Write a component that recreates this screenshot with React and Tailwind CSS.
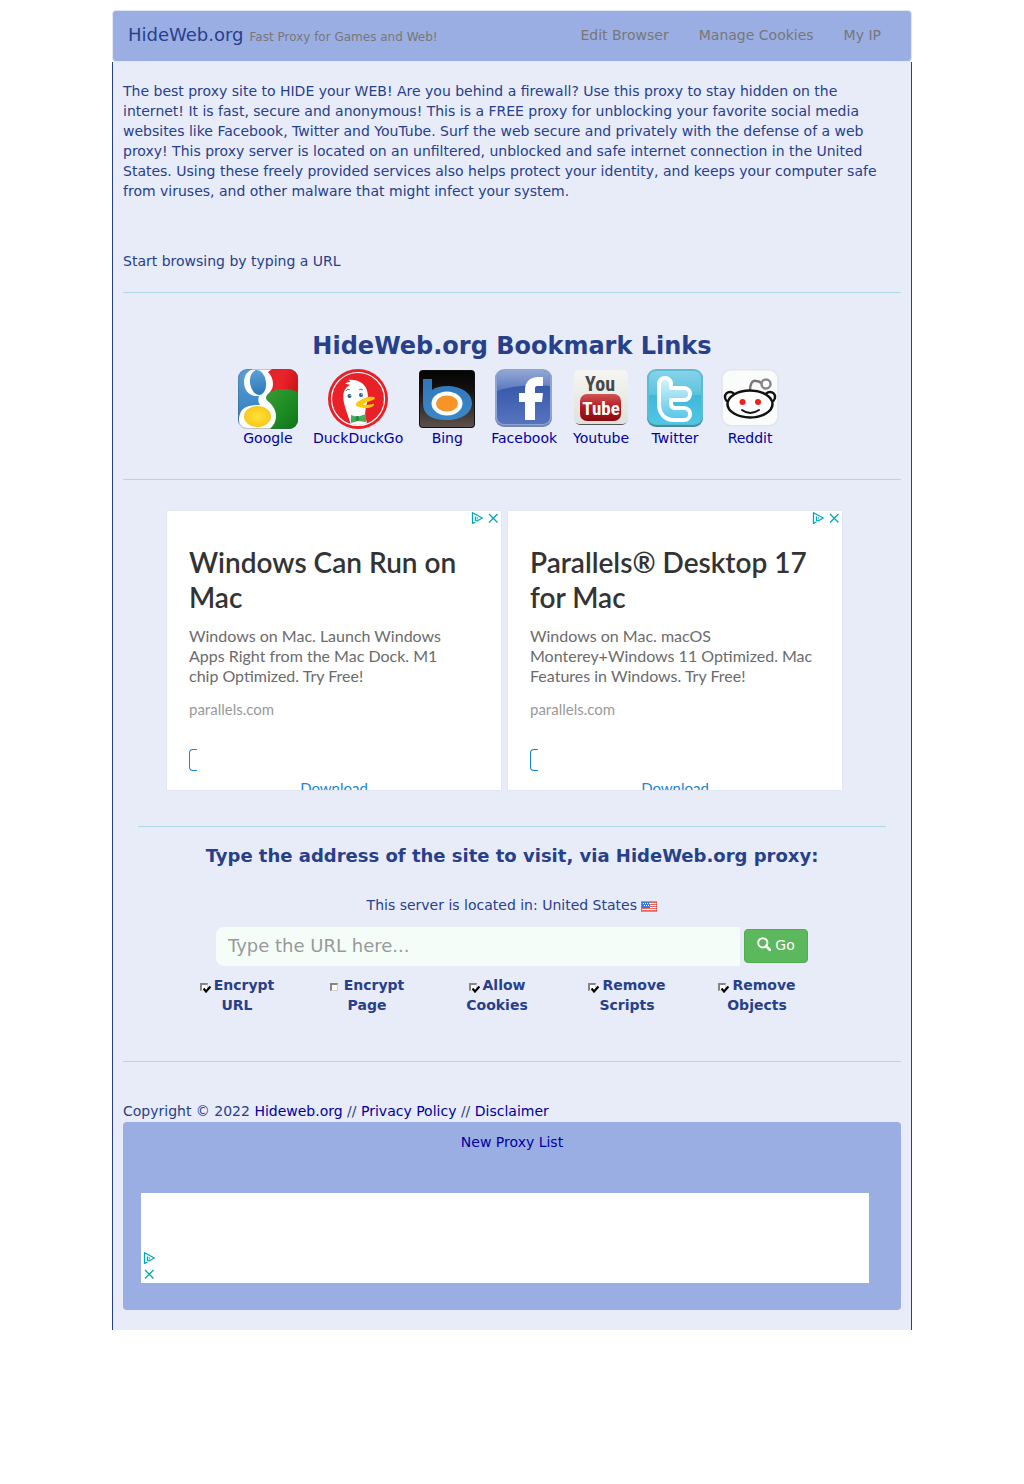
import React from "react";

function GoogleLogo() {
  return (
    <svg viewBox="0 0 60 60" className="h-15 w-15" aria-hidden="true">
      <defs>
        <clipPath id="g-clip"><rect width="60" height="60" rx="9" /></clipPath>
        <linearGradient id="g-blue" x1="0" y1="0" x2="0" y2="1">
          <stop offset="0" stopColor="#5da0d8" /><stop offset="1" stopColor="#2a78b8" />
        </linearGradient>
        <linearGradient id="g-green" x1="0" y1="0" x2="1" y2="1">
          <stop offset="0" stopColor="#3f9a3a" /><stop offset="0.500" stopColor="#1f8f25" /><stop offset="1" stopColor="#0e7418" />
        </linearGradient>
        <linearGradient id="g-red" x1="0" y1="0" x2="1" y2="0.300">
          <stop offset="0" stopColor="#d5262b" /><stop offset="0.600" stopColor="#ea2429" /><stop offset="1" stopColor="#d2141a" />
        </linearGradient>
        <radialGradient id="g-yellow"><stop offset="0" stopColor="#ffe13a" /><stop offset="1" stopColor="#f8c81c" /></radialGradient>
      </defs>
      <g clipPath="url(#g-clip)">
        <rect width="60" height="60" fill="url(#g-blue)" />
        <path d="M24 0h36v32H28z" fill="url(#g-red)" />
        <path d="M25 29c7-9 22-12 35-6v38H24z" fill="url(#g-green)" />
        <path d="M15 0h19l-4 3c3 3 5 7 5 12 0 6-4 9-6 11-2 3-1 5 2 7 4 4 7 8 7 14 0 6-3 10-6 13H3C0 56 0 46 4 41c4-4 11-5 18-5-2-3-2-6-1-9C12 28 6 22 6 13 6 7 9 2 15 0z" fill="#fff" />
        <ellipse cx="20" cy="13.500" rx="8" ry="12.500" transform="rotate(-8 20 13.500)" fill="url(#g-blue)" />
        <ellipse cx="19.500" cy="47.500" rx="13.500" ry="10.500" fill="url(#g-yellow)" />
        <rect x="0.500" y="0.500" width="59" height="59" rx="9" fill="none" stroke="#456" strokeOpacity="0.350" />
      </g>
    </svg>
  );
}

function DuckLogo() {
  return (
    <svg viewBox="0 0 60 60" className="h-15 w-15" aria-hidden="true">
      <defs><clipPath id="d-clip"><circle cx="30" cy="30" r="26" /></clipPath></defs>
      <circle cx="30" cy="30" r="30" fill="#ea2028" />
      <circle cx="30" cy="30" r="26.500" fill="none" stroke="#fff" strokeWidth="1.200" />
      <g clipPath="url(#d-clip)">
        <path d="M24 60c-2-9-6-17-8-26-2-9 0-15 6-18-2-1-3-1-5-1 2-2 4-2 5-2 0-1-1-2-2-2 8-1 15 2 18 8 3 6 2 13 0 18l-1 8 3 15z" fill="#fff" />
        <path d="M28 35c1-3 5-4 9-6 4-2 10-1 10 0 0 2-6 3-10 5-3 1-2 2 1 2 4 0 8-2 8-1 1 2-5 5-10 4-4-1-9-1-8-4z" fill="#fdc90a" />
        <circle cx="21.500" cy="27" r="2" fill="#245f90" /><circle cx="33" cy="26" r="2" fill="#245f90" />
        <circle cx="22.200" cy="26.300" r="0.600" fill="#fff" /><circle cx="33.700" cy="25.300" r="0.600" fill="#fff" />
        <path d="M18 22c1-2 3-2 4-1M31 21c1-1 3-1 4 0" fill="none" stroke="#4b7ba0" strokeWidth="1" />
        <path d="M23 46l6 2 9-3v8l-8-1-7 2z" fill="#43b058" />
        <rect x="27.500" y="47" width="3.500" height="5" rx="1" fill="#248c48" />
      </g>
    </svg>
  );
}

function BingLogo() {
  return (
    <svg viewBox="0 0 60 60" className="h-15 w-15" aria-hidden="true">
      <defs>
        <linearGradient id="b-bg" x1="0" y1="0" x2="0" y2="1">
          <stop offset="0" stopColor="#050505" /><stop offset="0.350" stopColor="#15110f" /><stop offset="1" stopColor="#5c504b" />
        </linearGradient>
        <linearGradient id="b-blue" x1="0" y1="0" x2="0" y2="1">
          <stop offset="0" stopColor="#2f76b8" /><stop offset="1" stopColor="#3a88c8" />
        </linearGradient>
      </defs>
      <rect x="2" y="1" width="56" height="58" rx="4" fill="#111" />
      <rect x="3" y="2" width="54" height="56" rx="3" fill="url(#b-bg)" />
      <path d="M6 10h9v11c4-3 9-4 15-4 14 0 25 7 25 17S45 51 30 51 6 46 6 34z" fill="url(#b-blue)" />
      <ellipse cx="30" cy="34.500" rx="15.500" ry="12" fill="#fff" />
      <ellipse cx="30" cy="34.500" rx="11" ry="8" fill="#f89427" />
    </svg>
  );
}

function FacebookLogo() {
  return (
    <svg viewBox="0 0 60 60" className="h-15 w-15" aria-hidden="true">
      <defs>
        <linearGradient id="f-bg" x1="0" y1="0" x2="0" y2="1">
          <stop offset="0" stopColor="#2c50a4" /><stop offset="1" stopColor="#5673bd" />
        </linearGradient>
        <linearGradient id="f-shine" x1="0" y1="0" x2="0" y2="1">
          <stop offset="0" stopColor="#91a6d5" /><stop offset="1" stopColor="#5a77bd" />
        </linearGradient>
      </defs>
      <rect x="1" y="1" width="57" height="57" rx="9" fill="#7186b6" />
      <rect x="1" y="0" width="57" height="56" rx="9" fill="#8fa5d5" />
      <rect x="3" y="2" width="53" height="53" rx="7" fill="url(#f-bg)" />
      <path d="M3 22V9q0-7 7-7h39q7 0 7 7v8C36 15 18 17 3 22z" fill="url(#f-shine)" />
      <path d="M31 51V33h-6v-9h6v-3c0-8 5-13 13-13h5v9h-5c-3 0-3 1-3 4v3h8l-1 9h-7v18z" fill="#fff" />
    </svg>
  );
}

function YoutubeLogo() {
  return (
    <svg viewBox="0 0 60 60" className="h-15 w-15" aria-hidden="true">
      <defs>
        <linearGradient id="y-bg" x1="0" y1="0" x2="0" y2="1">
          <stop offset="0" stopColor="#f5f5f2" /><stop offset="1" stopColor="#e0e0dc" />
        </linearGradient>
        <linearGradient id="y-red" x1="0" y1="0" x2="0" y2="1">
          <stop offset="0" stopColor="#cf5555" /><stop offset="0.500" stopColor="#b4181e" /><stop offset="1" stopColor="#870c12" />
        </linearGradient>
      </defs>
      <rect x="4" y="3" width="52" height="53" rx="5" fill="#555" />
      <rect x="3" y="1" width="54" height="54" rx="5" fill="url(#y-bg)" />
      <rect x="9" y="25" width="41" height="27" rx="7" fill="url(#y-red)" />
      <text x="29" y="22" textAnchor="middle" fontFamily="'Liberation Sans Narrow', 'Roboto Condensed', Roboto, sans-serif" fontWeight="700" fontSize="20" fill="#484848">You</text>
      <text x="30" y="46" textAnchor="middle" fontFamily="'Liberation Sans Narrow', 'Roboto Condensed', Roboto, sans-serif" fontWeight="700" fontSize="19" fill="#fff">Tube</text>
    </svg>
  );
}

function TwitterLogo() {
  const outline =
    "M14 15c0-4 3-6 6-6s6 2 6 6v4h13c4 0 6 3 6 6s-2 6-6 6H26v3c0 3 1 5 4 5h9c4 0 6 3 6 6s-2 6-6 6H29c-9 0-15-6-15-16z";
  return (
    <svg viewBox="0 0 60 60" className="h-15 w-15" aria-hidden="true">
      <defs>
        <linearGradient id="t-bg" x1="0" y1="0" x2="0" y2="1">
          <stop offset="0" stopColor="#86d2e8" /><stop offset="0.450" stopColor="#5cc3de" /><stop offset="0.460" stopColor="#41b8da" /><stop offset="1" stopColor="#4fc6e4" />
        </linearGradient>
        <linearGradient id="t-in" x1="0" y1="0" x2="0" y2="1">
          <stop offset="0" stopColor="#d8f3fb" /><stop offset="1" stopColor="#52c6e8" />
        </linearGradient>
      </defs>
      <rect x="2" y="1" width="56" height="57" rx="9" fill="#448ca2" />
      <rect x="2" y="0" width="56" height="56" rx="9" fill="#5cbcd4" />
      <rect x="4" y="2" width="52" height="53" rx="7" fill="url(#t-bg)" />
      <path d={outline} fill="url(#t-in)" stroke="#fff" strokeWidth="4" strokeLinejoin="round" />
    </svg>
  );
}

function RedditLogo() {
  return (
    <svg viewBox="0 0 60 60" className="h-15 w-15" aria-hidden="true">
      <rect x="2" y="0.750" width="56" height="56" rx="9" fill="#fafcfb" stroke="#e2e4ea" strokeWidth="1.500" />
      <path d="M30 22c0-7 2-11 6-10 4 0 5 2 7 3" fill="none" stroke="#777" strokeWidth="2.500" />
      <circle cx="46" cy="15" r="4.500" fill="#fff" stroke="#888" strokeWidth="2.500" />
      <g fill="#fff" stroke="#111" strokeWidth="2.500">
        <circle cx="10" cy="28" r="5" /><circle cx="50" cy="28" r="5" />
        <ellipse cx="30" cy="35" rx="22.500" ry="13.500" />
      </g>
      <circle cx="22.500" cy="33" r="3" fill="#f0201c" /><circle cx="38" cy="33" r="3" fill="#f0201c" />
      <path d="M22 41q8 6 17 0" fill="none" stroke="#111" strokeWidth="2" strokeLinecap="round" />
    </svg>
  );
}

function AdMark({ className = "" }) {
  return (
    <span className={`flex gap-1 ${className}`}>
      <a href="#adchoices" aria-label="AdChoices">
        <svg viewBox="0 0 12 12" className="size-3" fill="none" stroke="#00a5b8" aria-hidden="true">
          <path d="M4.500 10L1.500 11.300V0.700L11.300 6 6 9 4.500 8.500V4.500" strokeWidth="1.300" strokeLinejoin="round" />
          <path d="M6.300 5v2.500" strokeWidth="0.800" />
        </svg>
      </a>
      <button type="button" aria-label="Close ad">
        <svg viewBox="0 0 12 12" className="size-3" fill="none" stroke="#00a5b8" strokeWidth="1.300" aria-hidden="true">
          <path d="M2 2l8.500 8.500M10.500 2L2 10.500" />
        </svg>
      </button>
    </span>
  );
}

function Flag() {
  return (
    <svg viewBox="0 0 16 11" className="inline-block h-[11px] w-4 align-[-2px]" role="img" aria-label="United States">
      <rect width="16" height="11" fill="#fff" />
      <path d="M0 1.500h16M0 3.500h16M0 5.500h16M0 7.500h16M0 9.500h16" stroke="#e8695c" />
      <rect x="1" y="1" width="8" height="6" fill="#3b7be0" />
      <path d="M2 2.500h7M3 4.500h6" stroke="#fff" strokeDasharray="1 1" />
      <rect x="0.500" y="0.500" width="15" height="10" fill="none" stroke="#b0404a" strokeOpacity="0.600" />
    </svg>
  );
}

function Option({ label, checked }) {
  return (
    <label className="block px-[15px] text-center font-bold">
      <span className="relative mr-1 inline-block size-[10px] align-[-3px]">
        <input
          type="checkbox"
          defaultChecked={checked}
          className="peer block size-2 appearance-none border-t-2 border-l-2 border-r border-b border-t-[#858585] border-l-[#858585] border-r-[#d8d4cc] border-b-[#d8d4cc] bg-white"
        />
        <svg viewBox="0 0 8 8" className="pointer-events-none absolute top-[2px] left-[3px] hidden size-2 peer-checked:block" fill="none" stroke="#000" strokeWidth="2.200" aria-hidden="true">
          <path d="M0.500 3.500L3 6.500 7.500 1.500" />
        </svg>
      </span>
      {label}
    </label>
  );
}

function Ad({ title, text }) {
  return (
    <article className="relative h-[279px] flex-1 overflow-hidden bg-white px-[22px] pt-[34px] font-['Lato',sans-serif] shadow-[0_0_1px_#c4c8d4]">
      <AdMark className="absolute top-px right-[2px]" />
      <h3 className="text-[28px] leading-[35px] font-semibold text-[#333]">{title}</h3>
      <p className="mt-[11px] text-[16px] leading-5 text-[#6b6b6b]">{text}</p>
      <p className="mt-[13px] text-[15px] leading-5 text-[#9a9a9a]">parallels.com</p>
      <div className="mt-[30px] h-[22px] w-2 rounded-l-[4px] border-y border-l border-[#1a84d6]" />
      <a href="#download" className="mt-[7px] block text-center text-[15px] leading-5 text-[#1a84d6]">Download</a>
    </article>
  );
}

const bookmarks = [
  { name: "Google", Logo: GoogleLogo, width: "min-w-15" },
  { name: "DuckDuckGo", Logo: DuckLogo, width: "min-w-15" },
  { name: "Bing", Logo: BingLogo, width: "w-[58px]" },
  { name: "Facebook", Logo: FacebookLogo, width: "min-w-15" },
  { name: "Youtube", Logo: YoutubeLogo, width: "w-[58px]" },
  { name: "Twitter", Logo: TwitterLogo, width: "min-w-15" },
  { name: "Reddit", Logo: RedditLogo, width: "min-w-15" },
];

const options = [
  { label: "Encrypt URL", checked: true },
  { label: "Encrypt Page", checked: false },
  { label: "Allow Cookies", checked: true },
  { label: "Remove Scripts", checked: true },
  { label: "Remove Objects", checked: true },
];

export default function App() {
  return (
    <div className="mx-auto max-w-[800px] pt-[10px] font-['DejaVu_Sans',sans-serif] text-[14px] leading-5 text-[#27408b]">
      <header className="flex h-13 items-center justify-between rounded border border-[#e3e7f3] bg-[#9baee3] px-[15px]">
        <div>
          <a href="#home" className="text-[18px]">HideWeb.org</a>
          <small className="ml-[6px] text-[12px] text-[#777]">Fast Proxy for Games and Web!</small>
        </div>
        <nav className="flex gap-[30px] pr-[15px] pb-[2px] text-[#777]">
          <a href="#edit">Edit Browser</a>
          <a href="#cookies">Manage Cookies</a>
          <a href="#ip">My IP</a>
        </nav>
      </header>

      <main className="border-x border-[#27408b] bg-[#e7ecf8] px-[10px] pt-[19px] pb-5">
        <p>
          The best proxy site to HIDE your WEB! Are you behind a firewall? Use this proxy to stay hidden on the internet! It is fast, secure and anonymous! This is a FREE proxy for unblocking your favorite social media websites like Facebook, Twitter and YouTube. Surf the web secure and privately with the defense of a web proxy! This proxy server is located on an unfiltered, unblocked and safe internet connection in the United States. Using these freely provided services also helps protect your identity, and keeps your computer safe from viruses, and other malware that might infect your system.
        </p>
        <p className="mt-[50px]">Start browsing by typing a URL</p>
        <hr className="mt-[21px] border-[#add8e6]" />

        <section>
          <h1 className="mt-10 text-center text-[24px] leading-[26px] font-bold">HideWeb.org Bookmark Links</h1>
          <ul className="mt-[10px] flex justify-center gap-[15px] pr-[6px]">
            {bookmarks.map(({ name, Logo, width }) => (
              <li key={name} className={width}>
                <a href={`#${name}`} className="flex flex-col items-center text-[#0000a0]">
                  <Logo />
                  <span className="-mt-px">{name}</span>
                </a>
              </li>
            ))}
          </ul>
        </section>
        <hr className="mt-[31px] border-[#add8e6]" />

        <section className="mt-[31px] flex gap-[7px] pr-[59px] pl-[44px]">
          <Ad title="Windows Can Run on Mac" text={<>Windows on Mac. Launch Windows Apps Right from the Mac Dock. M1 <br />chip Optimized. Try Free!</>} />
          <Ad title="Parallels® Desktop 17 for Mac" text="Windows on Mac. macOS Monterey+Windows 11 Optimized. Mac Features in Windows. Try Free!" />
        </section>

        <form className="px-[15px]" onSubmit={(e) => e.preventDefault()}>
          <hr className="mt-9 border-[#add8e6]" />
          <h2 className="mt-[19px] text-center text-[18px] font-bold">Type the address of the site to visit, via HideWeb.org proxy:</h2>
          <p className="mt-[29px] text-center">This server is located in: United States <Flag /></p>
          <div className="mt-3 flex items-center justify-center gap-1 px-[78px]">
            <input
              type="text"
              aria-label="URL"
              placeholder="Type the URL here..."
              className="h-[39px] min-w-0 flex-1 rounded-l-lg bg-[#f5fdf8] px-3 pb-[2px] text-[18px] placeholder:text-[#999]"
            />
            <button type="submit" className="mb-[2px] flex h-[34px] w-16 items-center justify-center gap-1 rounded border border-[#4cae4c] bg-[#5cb85c] pb-[2px] text-white">
              <svg viewBox="0 0 14 14" className="mb-[2px] size-[14px]" fill="none" stroke="currentColor" aria-hidden="true">
                <circle cx="5.800" cy="5.800" r="4.600" strokeWidth="2" />
                <path d="M9 9l4 4" strokeWidth="2.600" strokeLinecap="round" />
              </svg>
              Go
            </button>
          </div>
          <div className="mt-[9px] grid grid-cols-5 pr-[64px] pl-[34px]">
            {options.map((o) => <Option key={o.label} {...o} />)}
          </div>
        </form>
        <hr className="mt-[46px] border-[#add8e6]" />

        <footer className="mt-[39px]">
          <p>
            Copyright © 2022 <a href="#home" className="text-[#0000a0]">Hideweb.org</a> // <a href="#privacy" className="text-[#0000a0]">Privacy Policy</a> // <a href="#disclaimer" className="text-[#0000a0]">Disclaimer</a>
          </p>
          <div className="mt-px rounded bg-[#9baee3] px-[18px] pt-[10px] pb-[27px] text-center">
            <a href="#list" className="text-[#0000a0]">New Proxy List</a>
            <div className="mt-[41px] mr-[14px] flex h-[90px] items-end bg-white px-[2px] pb-[3px]">
              <AdMark className="flex-col" />
            </div>
          </div>
        </footer>
      </main>
    </div>
  );
}
